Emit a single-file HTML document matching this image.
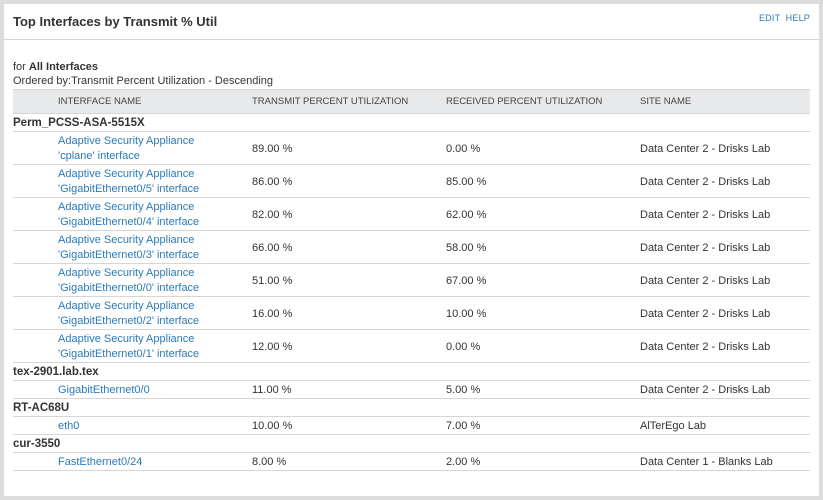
<!DOCTYPE html>
<html><head><style>
body{margin:0;background:#dcdcdc;font-family:"Liberation Sans",sans-serif;width:823px;height:500px;overflow:hidden}
.p{position:absolute;left:4px;top:4px;width:815px;height:492px;background:#fff}
.h{height:35px;border-bottom:1px solid #d6d6d6;position:relative}
.t{position:absolute;left:9px;top:10px;font-size:13px;font-weight:bold;color:#333}
.e{position:absolute;right:9px;top:9px;font-size:9px;color:#2b7ab8;letter-spacing:0.2px}
.f{position:absolute;left:9px;top:56px;font-size:11px;color:#333;line-height:14px}
table{position:absolute;left:9px;top:85px;width:797px;border-collapse:collapse;font-size:11px;color:#333}
th{background:#e8e9ea;font-weight:normal;text-align:left;font-size:9.5px;height:23px;padding:0;border-top:1px solid #d6d6d6;border-bottom:1px solid #d6d6d6;color:#444}
td{padding:1px 0 0 0;border-bottom:1px solid #d6d6d6;line-height:15px}
tr.g td{font-weight:bold;height:16px;font-size:11.5px}
tr.d td{height:30px;padding-top:2px}
tr.s td{height:16px}
a{color:#2b7ab8;text-decoration:none}
.c1{width:45px}.c2{width:194px}.c3{width:194px}.c4{width:194px}
</style></head><body><div class="p">
<div class="h"><div class="t">Top Interfaces by Transmit % Util</div><div class="e">EDIT&nbsp; HELP</div></div>
<div class="f">for <b>All Interfaces</b><br>Ordered by:Transmit Percent Utilization - Descending</div>
<table>
<tr><th class="c1"></th><th class="c2">INTERFACE NAME</th><th class="c3">TRANSMIT PERCENT UTILIZATION</th><th class="c4">RECEIVED PERCENT UTILIZATION</th><th>SITE NAME</th></tr>
<tr class="g"><td colspan="5">Perm_PCSS-ASA-5515X</td></tr>
<tr class="d"><td></td><td><a>Adaptive Security Appliance<br>'cplane' interface</a></td><td>89.00 %</td><td>0.00 %</td><td>Data Center 2 - Drisks Lab</td></tr>
<tr class="d"><td></td><td><a>Adaptive Security Appliance<br>'GigabitEthernet0/5' interface</a></td><td>86.00 %</td><td>85.00 %</td><td>Data Center 2 - Drisks Lab</td></tr>
<tr class="d"><td></td><td><a>Adaptive Security Appliance<br>'GigabitEthernet0/4' interface</a></td><td>82.00 %</td><td>62.00 %</td><td>Data Center 2 - Drisks Lab</td></tr>
<tr class="d"><td></td><td><a>Adaptive Security Appliance<br>'GigabitEthernet0/3' interface</a></td><td>66.00 %</td><td>58.00 %</td><td>Data Center 2 - Drisks Lab</td></tr>
<tr class="d"><td></td><td><a>Adaptive Security Appliance<br>'GigabitEthernet0/0' interface</a></td><td>51.00 %</td><td>67.00 %</td><td>Data Center 2 - Drisks Lab</td></tr>
<tr class="d"><td></td><td><a>Adaptive Security Appliance<br>'GigabitEthernet0/2' interface</a></td><td>16.00 %</td><td>10.00 %</td><td>Data Center 2 - Drisks Lab</td></tr>
<tr class="d"><td></td><td><a>Adaptive Security Appliance<br>'GigabitEthernet0/1' interface</a></td><td>12.00 %</td><td>0.00 %</td><td>Data Center 2 - Drisks Lab</td></tr>
<tr class="g"><td colspan="5">tex-2901.lab.tex</td></tr>
<tr class="s"><td></td><td><a>GigabitEthernet0/0</a></td><td>11.00 %</td><td>5.00 %</td><td>Data Center 2 - Drisks Lab</td></tr>
<tr class="g"><td colspan="5">RT-AC68U</td></tr>
<tr class="s"><td></td><td><a>eth0</a></td><td>10.00 %</td><td>7.00 %</td><td>AlTerEgo Lab</td></tr>
<tr class="g"><td colspan="5">cur-3550</td></tr>
<tr class="s"><td></td><td><a>FastEthernet0/24</a></td><td>8.00 %</td><td>2.00 %</td><td>Data Center 1 - Blanks Lab</td></tr>
</table>
</div></body></html>
